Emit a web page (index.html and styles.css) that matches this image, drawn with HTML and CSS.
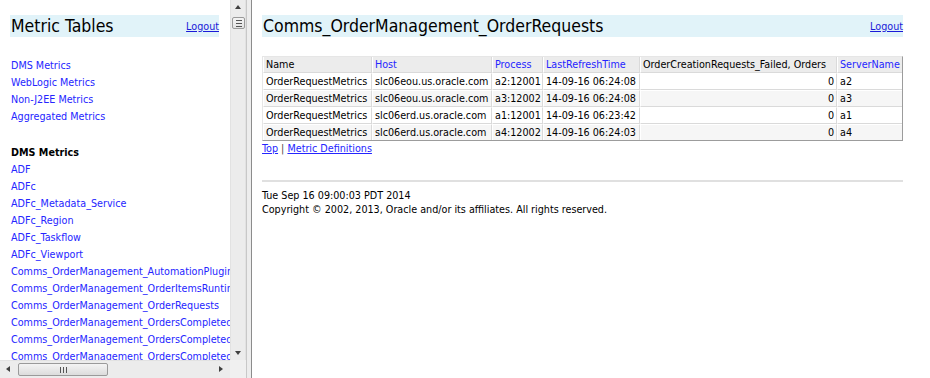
FILE: index.html
```html
<!DOCTYPE html>
<html lang="en">
<head>
    <meta charset="UTF-8">
    <title>Metric Tables</title>
    <link rel="stylesheet" href="styles.css">
</head>
<body>
    <div class="frameset">
        <div class="nav-frame">
            <div class="nav-view">
                <div class="nav-page">
                    <div class="title-bar nav-title">
                        <h1>Metric Tables</h1>
                        <a href="#" class="logout">Logout</a>
                    </div>
                    <ul class="link-list">
                        <li><a href="#">DMS Metrics</a></li>
                        <li><a href="#">WebLogic Metrics</a></li>
                        <li><a href="#">Non-J2EE Metrics</a></li>
                        <li><a href="#">Aggregated Metrics</a></li>
                    </ul>
                    <h2>DMS Metrics</h2>
                    <ul class="link-list">
                        <li><a href="#">ADF</a></li>
                        <li><a href="#">ADFc</a></li>
                        <li><a href="#">ADFc_Metadata_Service</a></li>
                        <li><a href="#">ADFc_Region</a></li>
                        <li><a href="#">ADFc_Taskflow</a></li>
                        <li><a href="#">ADFc_Viewport</a></li>
                        <li><a href="#">Comms_OrderManagement_AutomationPluginMetrics</a></li>
                        <li><a href="#">Comms_OrderManagement_OrderItemsRuntimeMetrics</a></li>
                        <li><a href="#">Comms_OrderManagement_OrderRequests</a></li>
                        <li><a href="#">Comms_OrderManagement_OrdersCompletedByCartridge</a></li>
                        <li><a href="#">Comms_OrderManagement_OrdersCompletedByType</a></li>
                        <li><a href="#">Comms_OrderManagement_OrdersCompletedInTime</a></li>
                    </ul>
                </div>
            </div>
            <div class="vscroll">
                <span class="arrow up"></span>
                <span class="vthumb"><i></i><i></i><i></i></span>
                <span class="arrow down"></span>
            </div>
            <div class="hscroll">
                <span class="arrow left"></span>
                <span class="hthumb"><i></i><i></i><i></i></span>
                <span class="arrow right"></span>
            </div>
            <div class="corner"></div>
        </div>

        <div class="frame-border"></div>

        <div class="main-frame">
            <div class="title-bar">
                <h1>Comms_OrderManagement_OrderRequests</h1>
                <a href="#" class="logout">Logout</a>
            </div>

            <table class="metrics">
                <colgroup>
                    <col style="width: 109px">
                    <col style="width: 120px">
                    <col style="width: 51px">
                    <col style="width: 97px">
                    <col style="width: 197px">
                    <col>
                </colgroup>
                <thead>
                    <tr>
                        <th>Name</th>
                        <th><a href="#">Host</a></th>
                        <th><a href="#">Process</a></th>
                        <th><a href="#">LastRefreshTime</a></th>
                        <th>OrderCreationRequests_Failed, Orders</th>
                        <th><a href="#">ServerName</a></th>
                    </tr>
                </thead>
                <tbody>
                    <tr>
                        <td>OrderRequestMetrics</td>
                        <td>slc06eou.us.oracle.com</td>
                        <td>a2:12001</td>
                        <td>14-09-16 06:24:08</td>
                        <td class="num">0</td>
                        <td>a2</td>
                    </tr>
                    <tr>
                        <td>OrderRequestMetrics</td>
                        <td>slc06eou.us.oracle.com</td>
                        <td>a3:12002</td>
                        <td>14-09-16 06:24:08</td>
                        <td class="num">0</td>
                        <td>a3</td>
                    </tr>
                    <tr>
                        <td>OrderRequestMetrics</td>
                        <td>slc06erd.us.oracle.com</td>
                        <td>a1:12001</td>
                        <td>14-09-16 06:23:42</td>
                        <td class="num">0</td>
                        <td>a1</td>
                    </tr>
                    <tr>
                        <td>OrderRequestMetrics</td>
                        <td>slc06erd.us.oracle.com</td>
                        <td>a4:12002</td>
                        <td>14-09-16 06:24:03</td>
                        <td class="num">0</td>
                        <td>a4</td>
                    </tr>
                </tbody>
            </table>

            <p class="table-links"><a href="#">Top</a> <span class="sep">|</span> <a href="#">Metric Definitions</a></p>

            <hr>

            <p class="footer">
                Tue Sep 16 09:00:03 PDT 2014<br>
                Copyright &copy; 2002, 2013, Oracle and/or its affiliates. All rights reserved.
            </p>
        </div>
    </div>
</body>
</html>
```

FILE: styles.css
```css
html, body {
    margin: 0;
    padding: 0;
    height: 378px;
    overflow: hidden;
    background: #fff;
}

body {
    font-family: "DejaVu Sans Condensed", "Liberation Sans", sans-serif;
    font-size: 10.7px;
    color: #000;
}

a {
    color: #2525ff;
    text-decoration: none;
}

.frameset {
    display: flex;
    height: 378px;
}

/* left frame with its scrollbars */

.nav-frame {
    display: grid;
    grid-template-columns: 230px 16px;
    grid-template-rows: 360px 18px;
    width: 246px;
    flex: none;
}

.nav-view {
    overflow: hidden;
}

.nav-page {
    padding: 15px 0 0 10px;
    white-space: nowrap;
}

.title-bar {
    display: flex;
    justify-content: space-between;
    align-items: center;
    height: 22px;
    background: #e1f3f9;
}

.nav-title {
    width: 209px;
}

.title-bar h1 {
    margin: 0 0 0 1px;
    font-size: 17.5px;
    font-weight: normal;
    line-height: 22px;
}

.title-bar .logout {
    text-decoration: underline;
    color: #1a1ad8;
    font-size: 10.7px;
    margin-top: 1px;
}

.link-list {
    list-style: none;
    margin: 20px 0 0 1px;
    padding: 0;
}

.link-list li {
    line-height: 17px;
    height: 17px;
}

.nav-page h2 {
    margin: 19px 0 0 1px;
    font-size: 10.7px;
    line-height: 17px;
    font-weight: bold;
}

.nav-page h2 + .link-list {
    margin-top: 0;
}

.vscroll,
.hscroll,
.corner {
    background: #ececec;
    position: relative;
}

.vscroll {
    border-left: 1px solid #e2e2e2;
    border-right: 1px solid #e2e2e2;
}

.hscroll {
    border-top: 1px solid #e2e2e2;
}

.corner {
    background: #f0f0f0;
}

.arrow {
    position: absolute;
    width: 0;
    height: 0;
    border: 3px solid transparent;
}

.arrow.up {
    top: 5px;
    left: 4px;
    border-bottom: 4px solid #404040;
    border-top: 0;
}

.arrow.down {
    bottom: 5px;
    left: 4px;
    border-top: 4px solid #404040;
    border-bottom: 0;
}

.arrow.left {
    left: 6px;
    top: 5px;
    border-right: 4px solid #404040;
    border-left: 0;
}

.arrow.right {
    right: 7px;
    top: 5px;
    border-left: 4px solid #404040;
    border-right: 0;
}

.vthumb,
.hthumb {
    position: absolute;
    display: flex;
    justify-content: center;
    align-items: center;
    gap: 2px;
    background: linear-gradient(to right, #f4f4f4, #e2e2e2);
    border: 1px solid #9a9a9a;
    border-radius: 2px;
    box-sizing: border-box;
}

.vthumb {
    top: 17px;
    left: 1px;
    width: 13px;
    height: 12px;
    flex-direction: column;
    background: linear-gradient(to bottom, #f4f4f4, #e2e2e2);
}

.vthumb i {
    display: block;
    width: 6px;
    height: 1px;
    background: #555;
}

.hthumb {
    left: 18px;
    top: 2px;
    width: 90px;
    height: 13px;
    background: linear-gradient(to bottom, #f4f4f4, #dcdcdc);
}

.hthumb i {
    display: block;
    width: 1px;
    height: 6px;
    background: #555;
}

.frame-border {
    width: 4px;
    flex: none;
    background: #ededed;
    border-left: 1px solid #c8c8c8;
    border-right: 1px solid #8c8c8c;
}

/* right frame */

.main-frame {
    flex: 1;
    padding: 15px 27px 0 10px;
    overflow: hidden;
}

.metrics {
    width: 641px;
    margin-top: 19px;
    table-layout: fixed;
    border-collapse: separate;
    border-spacing: 0;
    border-top: 1px solid #e6e6e6;
    border-left: 1px solid #e6e6e6;
    border-right: 1px solid #9c9c9c;
    border-bottom: 1px solid #9c9c9c;
}

.metrics th,
.metrics td {
    padding: 0 2px;
    height: 15px;
    line-height: 15px;
    text-align: left;
    font-weight: normal;
    white-space: nowrap;
    overflow: hidden;
    border-top: 1px solid #fff;
    border-left: 1px solid #fff;
    border-right: 1px solid #dadada;
    border-bottom: 1px solid #dadada;
}

.metrics th {
    background: #ececec;
    border-top: 0;
}

.metrics tbody tr:nth-child(even) td {
    background: #f6f6f6;
}

.metrics tbody tr:last-child td {
    border-bottom: 0;
}

.metrics tr > :last-child {
    border-right: 0;
}

.metrics td.num {
    text-align: right;
}

.table-links {
    margin: 0;
    line-height: 16px;
}

.table-links a {
    text-decoration: underline;
}

.table-links .sep {
    color: #444;
}

hr {
    margin: 23px 0 0;
    height: 0;
    border: 0;
    border-top: 2px solid #e0e0e0;
}

.footer {
    margin: 7px 0 0;
    line-height: 14px;
}
```
